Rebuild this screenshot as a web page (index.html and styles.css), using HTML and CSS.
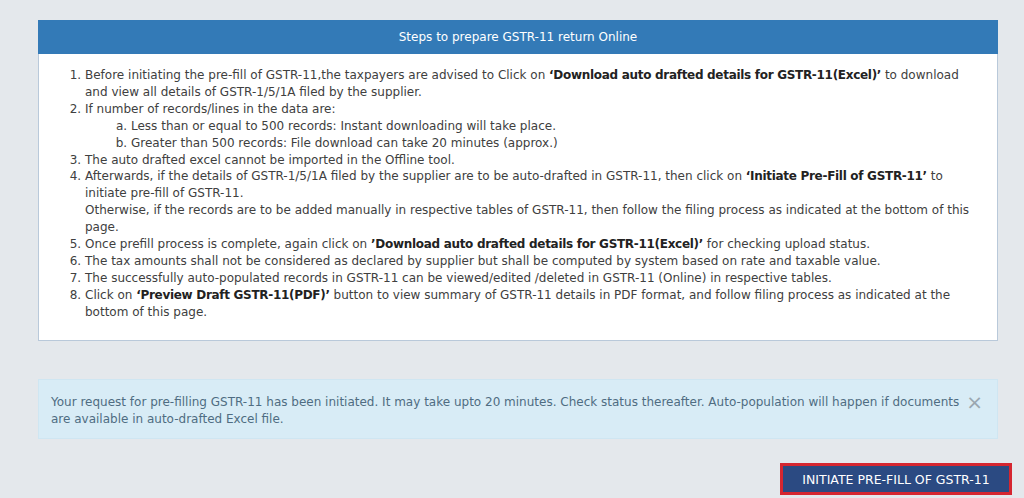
FILE: index.html
```html
<!DOCTYPE html>
<html>
<head>
<meta charset="utf-8">
<link rel="stylesheet" href="styles.css">
</head>
<body>
<div class="page">
  <div class="panel">
    <div class="panel-head">Steps to prepare GSTR-11 return Online</div>
    <div class="panel-body">
      <ol class="steps">
        <li>Before initiating the pre-fill of GSTR-11,the taxpayers are advised to Click on <b>‘Download auto drafted details for GSTR-11(Excel)’</b> to download and view all details of GSTR-1/5/1A filed by the supplier.</li>
        <li>If number of records/lines in the data are:
          <ol class="sub">
            <li>Less than or equal to 500 records: Instant downloading will take place.</li>
            <li>Greater than 500 records: File download can take 20 minutes (approx.)</li>
          </ol>
        </li>
        <li>The auto drafted excel cannot be imported in the Offline tool.</li>
        <li>Afterwards, if the details of GSTR-1/5/1A filed by the supplier are to be auto-drafted in GSTR-11, then click on <b>‘Initiate Pre-Fill of GSTR-11’</b> to initiate pre-fill of GSTR-11.<br>Otherwise, if the records are to be added manually in respective tables of GSTR-11, then follow the filing process as indicated at the bottom of this page.</li>
        <li>Once prefill process is complete, again click on <b>’Download auto drafted details for GSTR-11(Excel)’</b> for checking upload status.</li>
        <li>The tax amounts shall not be considered as declared by supplier but shall be computed by system based on rate and taxable value.</li>
        <li>The successfully auto-populated records in GSTR-11 can be viewed/edited /deleted in GSTR-11 (Online) in respective tables.</li>
        <li>Click on <b>‘Preview Draft GSTR-11(PDF)’</b> button to view summary of GSTR-11 details in PDF format, and follow filing process as indicated at the bottom of this page.</li>
      </ol>
    </div>
  </div>
  <div class="alert">
    <p class="alert-text">Your request for pre-filling GSTR-11 has been initiated. It may take upto 20 minutes. Check status thereafter. Auto-population will happen if documents are available in auto-drafted Excel file.</p>
    <span class="close">×</span>
  </div>
  <div class="actions">
    <button class="btn">INITIATE PRE-FILL OF GSTR-11</button>
  </div>
</div>
</body>
</html>
```

FILE: styles.css
```css
html, body {
  margin: 0;
  padding: 0;
  background: #e4e8ec;
}
body {
  font-family: "DejaVu Sans", Verdana, sans-serif;
  font-size: 12px;
  color: #333;
}
.page {
  width: 1024px;
  height: 498px;
  padding: 20px 26px 0 38px;
  box-sizing: border-box;
  overflow: hidden;
}
.panel {
  width: 960px;
  background: #fff;
  border: 1px solid #b9c9da;
  box-sizing: border-box;
}
.panel-head {
  height: 34px;
  background: #337ab7;
  color: #fff;
  display: flex;
  align-items: center;
  justify-content: center;
  font-size: 12px;
  margin: -1px -1px 0 -1px;
}
.panel-body {
  padding: 13px 14px 20px 30px;
  height: 286px;
  box-sizing: border-box;
}
.steps {
  margin: 0;
  padding-left: 16px;
  line-height: 16.9px;
  color: #404040;
}
.steps b {
  color: #222;
  letter-spacing: -0.3px;
}
.sub {
  list-style-type: lower-alpha;
  margin: 0;
  padding-left: 46px;
}
.alert {
  margin-top: 38px;
  width: 960px;
  height: 60px;
  box-sizing: border-box;
  background: #d8ecf6;
  border: 1px solid #cfe6f2;
  display: flex;
  align-items: flex-start;
  padding: 14px 14px 0 12px;
}
.alert-text {
  margin: 0;
  flex: 1;
  color: #4f6c82;
  line-height: 17px;
}
.close {
  color: #9aa7b0;
  font-size: 20px;
  line-height: 17px;
  margin-left: 6px;
}
.actions {
  display: flex;
  justify-content: flex-end;
  margin-top: 24px;
  width: 974px;
}
.btn {
  width: 232px;
  height: 32px;
  background: #2b4a82;
  color: #fff;
  border: 3px solid #d52630;
  font-family: "DejaVu Sans", Verdana, sans-serif;
  font-size: 12.5px;
  padding: 0;
}
```
